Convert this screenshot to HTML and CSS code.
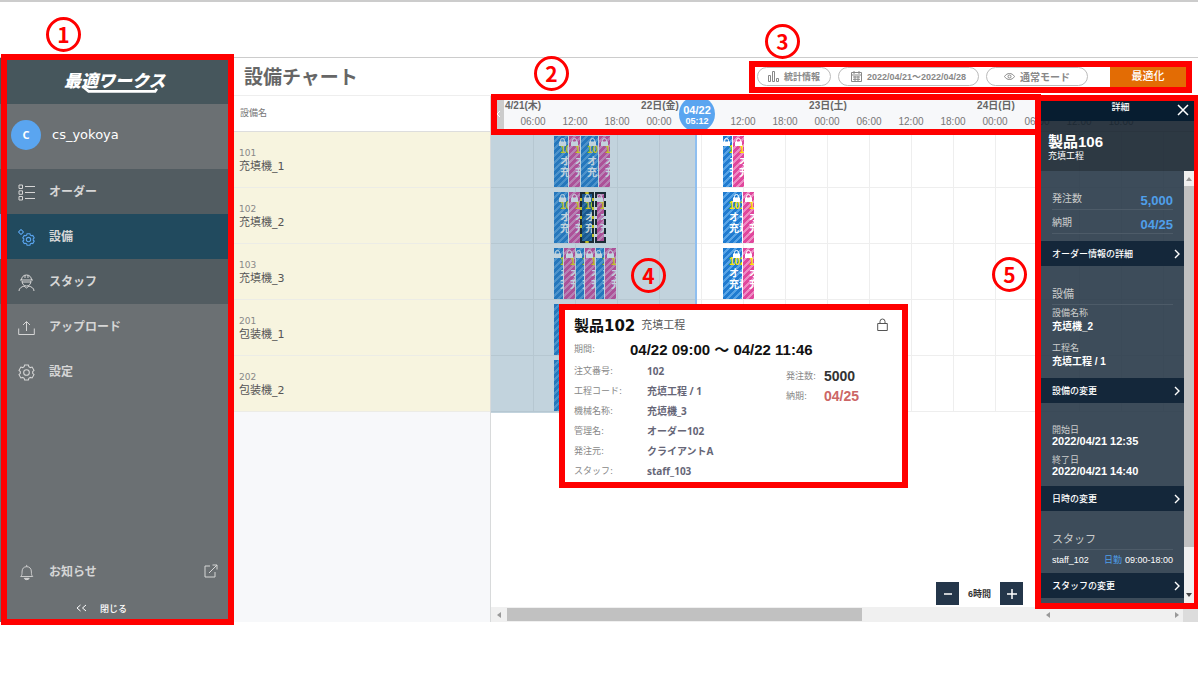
FILE: index.html
```html
<!DOCTYPE html>
<html lang="ja">
<head>
<meta charset="utf-8">
<title>設備チャート</title>
<link rel="stylesheet" href="styles.css">
</head>
<body>
<svg class="defs" aria-hidden="true">
  <symbol id="gear" viewBox="0 0 24 24"><path d="M8.7 3.84 9.34 1.33H14.66L15.3 3.84 17.42 5.07 19.91 4.36 22.57 8.97 20.71 10.78V13.22L22.57 15.03 19.91 19.64 17.42 18.93 15.3 20.16 14.66 22.67H9.34L8.7 20.16 6.58 18.93 4.09 19.64 1.43 15.03 3.29 13.22V10.78L1.43 8.97 4.09 4.36 6.58 5.07Z"/><circle cx="12" cy="12" r="4"/></symbol>
  <symbol id="lock" viewBox="0 0 7 8"><path d="M0 3.5h7V8H0z" fill="#fff"/><path d="M1.5 4V2.5a2 2 0 0 1 4 0V4" fill="none" stroke="#fff"/></symbol>
  <symbol id="chev" viewBox="0 0 6 10"><path d="m1 1 4 4-4 4" fill="none" stroke="#fff" stroke-width="1.4"/></symbol>
</svg>

<div class="app">
  <nav class="side">
    <div class="logo">
      <span class="logo-text">最適ワークス</span>
      <svg class="logo-line" viewBox="0 0 86 8"><path d="M0 0 6 5H82L84 2" fill="none" stroke="#fff" stroke-width="3"/></svg>
    </div>
    <div class="user"><span class="avatar">C</span><span>cs_yokoya</span></div>
    <div class="group">
      <a class="item" href="#"><svg class="ico" viewBox="0 0 17 17"><path d="M1 1h3.500v3.500H1zM1 6.800h3.500v3.500H1zM1 12.500h3.500V16H1zM7 2.500h10M7 8.500h10M7 14.500h10"/></svg>オーダー</a>
      <a class="item current" href="#"><svg class="ico" viewBox="0 0 17 17"><circle cx="3" cy="3" r="2"/><path d="M0 3h1M5 3h1M3 0v1M3 5v1"/><use href="#gear" class="thick" x="4" y="4" width="13" height="13"/></svg>設備</a>
      <a class="item" href="#"><svg class="ico" viewBox="0 0 17 17"><path d="M3.500 6C3.500 3 5.500 1 8.500 1s5 2 5 5M2 6h13M7 1v3M10 1v3M4 7c0 3 2 5 4.500 5S13 10 13 7M4 8h9M1 17c0-3 2.500-4 5-5l2.500 2L11 12c2.500 1 5 2 5 5"/></svg>スタッフ</a>
    </div>
    <a class="item" href="#"><svg class="ico" viewBox="0 0 17 17"><path d="M.7 9.500V15.500H16.300V9.500M8.500 12V3M5 6l3.500-3.500L12 6"/></svg>アップロード</a>
    <a class="item" href="#"><svg class="ico" viewBox="0 0 17 17"><use href="#gear" class="thin" width="17" height="17"/></svg>設定</a>
    <a class="item news" href="#"><svg class="ico" viewBox="0 0 17 19"><path d="M2 14h13.500c-1.500-1.500-1.500-2.500-1.500-5 0-4-2-6-5.300-6S3.500 5 3.500 9c0 2.500 0 3.500-1.500 5zM8.700 3V1"/><path d="M6 16h5.500c0 2-5.500 2-5.500 0z" fill="#ddd"/></svg>お知らせ<svg class="ext" viewBox="0 0 14 14"><path d="M6 2H1v11h10V8M5 9l8-8M8.500 1H13v4.500"/></svg></a>
    <button class="fold" type="button"><svg viewBox="0 0 11 8"><path d="M4.500 1 1 4l3.500 3M10 1 6.500 4 10 7"/></svg>閉じる</button>
    <div class="frame frame-side"></div>
    <span class="num num-1">1</span>
  </nav>

  <main class="main">
    <header class="top">
      <h1>設備チャート</h1>
      <div class="tools">
        <button class="pill stats" type="button"><svg viewBox="0 0 11 11"><path d="M.5 4.500h2v6h-2zM4.500.5h2v10h-2zM8.500 7.500h2v3h-2z"/></svg>統計情報</button>
        <button class="pill dates" type="button"><svg viewBox="0 0 11 11"><path d="M.5 1.500h10v9H.5zM.5 4h10M3 0v3M8 0v3M2 6h7M2 8.300h7M4 5v5M7 5v5"/></svg>2022/04/21～2022/04/28</button>
        <button class="pill mode" type="button"><svg viewBox="0 0 11 11"><path d="M.5 5.500c2.500-4 7.500-4 10 0-2.500 4-7.500 4-10 0z"/><circle cx="5.500" cy="5.500" r="1.500"/></svg>通常モード</button>
        <button class="run" type="button">最適化</button>
        <div class="frame frame-tools"></div>
        <span class="num num-3">3</span>
      </div>
    </header>

    <div class="chart">
      <section class="machines">
        <h2>設備名</h2>
        <ul>
          <li><small>101</small>充填機_1</li>
          <li><small>102</small>充填機_2</li>
          <li><small>103</small>充填機_3</li>
          <li><small>201</small>包装機_1</li>
          <li><small>202</small>包装機_2</li>
        </ul>
      </section>

      <section class="timeline">
        <div class="scale">
          <div class="days"><b>4/21(木)</b><b>22日(金)</b><b>23日(土)</b><b>24日(日)</b></div>
          <div class="hours"><span>06:00</span><span>12:00</span><span>18:00</span><span>00:00</span><span></span><span>12:00</span><span>18:00</span><span>00:00</span><span>06:00</span><span>12:00</span><span>18:00</span><span>00:00</span><span>06:00</span><span>12:00</span><span>18:00</span></div>
          <button class="back" type="button" aria-label="前へ"><svg viewBox="0 0 5 8"><path d="M4 1 1 4l3 3"/></svg></button>
          <div class="now"><b>04/22</b><b>05:12</b></div>
          <div class="frame frame-scale"></div>
          <span class="num num-2">2</span>
        </div>
        <div class="canvas">
          <div class="row">
            <div class="bar blue" style="left:63px;width:14px"><svg><use href="#lock"/></svg><b>10</b><span>オ</span><span>充</span></div>
            <div class="bar pink" style="left:78px;width:11px"><svg><use href="#lock"/></svg><b>1</b><span>オ</span><span>充</span></div>
            <div class="bar blue" style="left:90px;width:17px"><svg><use href="#lock"/></svg><b>103</b><span>オ</span><span>充填</span></div>
            <div class="bar pink" style="left:108px;width:11px"><svg><use href="#lock"/></svg><b>1</b><span>オ</span><span>充</span></div>
            <div class="bar blue" style="left:232px;width:9px"><svg><use href="#lock"/></svg><b>1</b><span>オ</span><span>充</span></div>
            <div class="bar pink" style="left:242px;width:11px"><svg><use href="#lock"/></svg><b>1</b><span>オ</span><span>充</span></div>
          </div>
          <div class="row">
            <div class="bar blue" style="left:63px;width:14px"><svg><use href="#lock"/></svg><b>10</b><span>オ</span><span>充</span></div>
            <div class="bar pink" style="left:78px;width:11px"><svg><use href="#lock"/></svg><b>1</b><span>オ</span><span>充</span></div>
            <div class="bar blue picked" style="left:89px;width:14px"><svg><use href="#lock"/></svg><b>10</b><span>オ</span><span>充</span></div>
            <div class="bar pink linked" style="left:104px;width:11px"><svg><use href="#lock"/></svg><b>1</b><span>オ</span><span>充</span></div>
            <div class="bar blue" style="left:232px;width:19px"><svg><use href="#lock"/></svg><b>101</b><span>オー</span><span>充填</span></div>
            <div class="bar pink" style="left:252px;width:11px"><svg><use href="#lock"/></svg><b>1</b><span>オ</span><span>充</span></div>
          </div>
          <div class="row">
            <div class="bar blue" style="left:63px;width:9px"><svg><use href="#lock"/></svg><b>1</b><span>オ</span><span>充</span></div>
            <div class="bar pink" style="left:73px;width:11px"><svg><use href="#lock"/></svg><b>1</b><span>オ</span><span>充</span></div>
            <div class="bar blue" style="left:85px;width:8px"><svg><use href="#lock"/></svg><b>1</b><span>オ</span><span>充</span></div>
            <div class="bar pink" style="left:94px;width:10px"><svg><use href="#lock"/></svg><b>1</b><span>オ</span><span>充</span></div>
            <div class="bar blue" style="left:105px;width:8px"><svg><use href="#lock"/></svg><b>1</b><span>オ</span><span>充</span></div>
            <div class="bar pink" style="left:114px;width:11px"><svg><use href="#lock"/></svg><b>1</b><span>オ</span><span>充</span></div>
            <div class="bar blue" style="left:232px;width:19px"><svg><use href="#lock"/></svg><b>102</b><span>オー</span><span>充填</span></div>
            <div class="bar pink" style="left:252px;width:11px"><svg><use href="#lock"/></svg><b>1</b><span>オ</span><span>充</span></div>
          </div>
          <div class="row"><div class="bar blue" style="left:63px;width:14px"></div></div>
          <div class="row"><div class="bar blue" style="left:63px;width:14px"></div></div>
          <div class="past"></div>

          <article class="tip">
            <header><h3>製品102</h3><span>充填工程</span><svg viewBox="0 0 11 13"><path d="M.7 5.500h9.600v7H.7zM3 5.500V3.500a2.500 2.500 0 0 1 5 0v2"/></svg></header>
            <div class="term"><span>期間:</span><b>04/22 09:00 ～ 04/22 11:46</b></div>
            <div class="facts">
              <dl class="info">
                <dt>注文番号:</dt><dd>102</dd>
                <dt>工程コード:</dt><dd>充填工程 / 1</dd>
                <dt>機械名称:</dt><dd>充填機_3</dd>
                <dt>管理名:</dt><dd>オーダー102</dd>
                <dt>発注元:</dt><dd>クライアントA</dd>
                <dt>スタッフ:</dt><dd>staff_103</dd>
              </dl>
              <dl class="due"><dt>発注数:</dt><dd>5000</dd><dt>納期:</dt><dd class="late">04/25</dd></dl>
            </div>
            <span class="num num-4">4</span>
          </article>

          <div class="zoom"><button type="button" aria-label="縮小"><svg viewBox="0 0 10 10"><path d="M1 5h8"/></svg></button><b>6時間</b><button type="button" aria-label="拡大"><svg viewBox="0 0 10 10"><path d="M0 5h10M5 0v10"/></svg></button></div>
        </div>
        <div class="hscroll">
          <svg viewBox="0 0 4 6"><path d="M4 0v6L0 3z"/></svg><i></i>
          <span><svg viewBox="0 0 4 6"><path d="M4 0v6L0 3z"/></svg><svg viewBox="0 0 4 6"><path d="M0 0v6l4-3z"/></svg></span><em></em>
        </div>
      </section>
    </div>

    <aside class="detail">
      <header class="detail-head">詳細<button type="button" aria-label="閉じる"><svg viewBox="0 0 12 12"><path d="m1 1 10 10M11 1 1 11"/></svg></button></header>
      <div class="product"><h2>製品106</h2>充填工程</div>
      <div class="detail-body">
        <div class="detail-list">
          <dl class="pairs"><div><dt>発注数</dt><dd>5,000</dd></div><div><dt>納期</dt><dd>04/25</dd></div></dl>
          <button class="link" type="button">オーダー情報の詳細<svg><use href="#chev"/></svg></button>
          <div class="block machine">
            <h3>設備</h3>
            <dl><dt>設備名称</dt><dd>充填機_2</dd><dt>工程名</dt><dd>充填工程 / 1</dd></dl>
          </div>
          <button class="link" type="button">設備の変更<svg><use href="#chev"/></svg></button>
          <div class="block times"><dl><dt>開始日</dt><dd>2022/04/21 12:35</dd><dt>終了日</dt><dd>2022/04/21 14:40</dd></dl></div>
          <button class="link" type="button">日時の変更<svg><use href="#chev"/></svg></button>
          <div class="block staff">
            <h3>スタッフ</h3>
            <p><span>staff_102</span><em>日勤</em><span>09:00-18:00</span></p>
          </div>
          <button class="link" type="button">スタッフの変更<svg><use href="#chev"/></svg></button>
        </div>
        <div class="vscroll"><svg viewBox="0 0 6 4"><path d="M0 4h6L3 0z" fill="#999"/></svg><i></i><svg viewBox="0 0 6 4"><path d="M0 0h6L3 4z" fill="#444"/></svg></div>
      </div>
      <span class="num num-5">5</span>
    </aside>
  </main>
</div>
</body>
</html>
```
FILE: styles.css
```css
* { box-sizing: border-box; }
body {
  margin: 0; min-height: 100vh; padding: 55px 0 53px; display: flex; flex-direction: column;
  border-top: 2px solid #ccc; background: #fff; overflow-x: hidden;
  font-family: "DejaVu Sans", "Noto Sans CJK JP", sans-serif; color: #555;
}
h1, h2, h3, ul, dl, dd, p { margin: 0; padding: 0; }
ul { list-style: none; }
button { border: 0; margin: 0; padding: 0; background: none; font: inherit; color: inherit; cursor: pointer; }
svg { fill: none; stroke: currentColor; flex: none; }
.defs { position: absolute; width: 0; height: 0; }

.app { flex: 1; display: flex; border-top: 1px solid #ccc; position: relative; }

/* annotation marks */
.frame { position: absolute; border: 6px solid #f00; pointer-events: none; z-index: 5; }
.num {
  position: absolute; z-index: 6; width: 35px; height: 35px; border: 3px solid #f00; border-radius: 50%;
  color: #f00; font: bold 21px/28px "Noto Sans CJK JP", sans-serif; text-align: center;
}
.frame-side { inset: -4px -4px -3px 1px; }
.frame-tools { inset: -6px -6px -6px -8px; }
.frame-scale { inset: -2px 157px -4px 0; }
.num-1 { left: 46px; top: -41px; }
.num-2 { left: 43px; top: -40px; }
.num-3 { left: 8px; top: -43px; }
.num-4 { left: 66px; top: -52px; }
.num-5 { left: -49px; top: 156px; }

/* sidebar */
.side { position: relative; z-index: 3; width: 230px; flex: none; display: flex; flex-direction: column; background: #6b7073; color: #ddd; }
.logo { height: 46px; padding: 12px 0 0 64px; background: #46565c; }
.logo-text { display: block; font: italic 900 17px/20px "Noto Sans CJK JP", sans-serif; color: #fff; white-space: nowrap; }
.logo-line { display: block; width: 82px; height: 7px; margin: -3px 0 0 16px; }
.user { height: 65px; display: flex; align-items: center; gap: 11px; padding: 0 0 4px 11px; font-size: 13px; color: #fff; }
.avatar { width: 30px; height: 30px; border-radius: 50%; background: #5aa5f0; font: bold 11px/30px "Noto Sans", sans-serif; text-align: center; }
.group { background: #525c61; }
.item { height: 45px; padding-left: 18px; display: flex; align-items: center; gap: 14px; font-size: 12px; font-weight: 700; color: #d6d6d6; text-decoration: none; padding-bottom: 3px; }
.ico { width: 17px; height: 17px; margin-top: 4px; }
.thin { stroke-width: 1.5; }
.thick { stroke-width: 2; }
.current { background: #214a5e; box-shadow: inset 1px 0 #5aa5f0; }
.current .ico { color: #5aa5f0; }
.news { margin-top: auto; }
.ext { width: 14px; height: 14px; margin: 2px 12px 0 auto; }
.fold { display: flex; align-items: center; gap: 13px; height: 28px; padding-left: 76px; font-size: 9px; font-weight: 500; color: #fff; }
.fold svg { width: 11px; height: 8px; }

/* header */
.main { flex: 1; min-width: 0; position: relative; display: flex; flex-direction: column; }
.top { height: 38px; display: flex; justify-content: space-between; align-items: center; padding: 0 12px 0 14px; border-bottom: 1px solid #eee; }
h1 { font-size: 19px; line-height: 28px; font-weight: 700; color: #666; }
.tools { position: relative; display: flex; align-items: center; gap: 7px; }
.pill { height: 19px; display: flex; align-items: center; justify-content: center; gap: 5px; border: 1px solid #bbb; border-radius: 10px; font: bold 9px "Liberation Sans", "Noto Sans CJK JP", sans-serif; color: #888; white-space: nowrap; }
.pill svg { width: 11px; height: 11px; }
.stats { width: 74px; }
.dates { width: 141px; }
.mode { width: 102px; font-size: 10px; }
.run { width: 76px; height: 20px; margin-left: 15px; background: #e36c04; color: #fff; font-size: 11px; line-height: 20px; font-weight: 500; }

/* chart */
.chart { flex: 1; display: grid; grid-template-columns: 261px minmax(0, 1fr); }
.machines { background: #f7f8fa; border-right: 1px solid #d8dadb; }
.machines h2 { height: 36px; padding-left: 10px; background: #fff; border-bottom: 1px solid #ddd; font-size: 9px; line-height: 34px; font-weight: 400; color: #777; }
.machines li { height: 56px; padding: 14px 0 0 9px; background: #f7f4df; border-bottom: 1px solid #ecece6; font-size: 11px; line-height: 14px; }
.machines small { display: block; font-size: 9px; color: #888; }
.timeline { position: relative; display: flex; flex-direction: column; }
.scale { position: relative; height: 36px; z-index: 1; background: #f7f8fa; border-bottom: 1px solid #ddd; font: 10px/16px "Liberation Sans", "Noto Sans CJK JP", sans-serif; color: #777; white-space: nowrap; }
.days, .hours { display: flex; overflow: hidden; }
.days { padding-top: 2px; color: #666; }
.days b { flex: none; width: 168px; text-align: center; }
.days b:first-child { width: 85px; padding-left: 14px; text-align: left; }
.hours { padding-left: 21px; }
.hours span { flex: none; width: 42px; text-align: center; }
.back { position: absolute; left: 0; top: 0; width: 13px; height: 36px; padding-left: 5px; background: #ccc; color: #fff; }
.back svg { display: block; width: 5px; height: 8px; }
.now { position: absolute; left: 188px; top: 0; width: 36px; height: 36px; padding-top: 8px; border-radius: 50%; background: #5aa5f0; color: #fff; text-align: center; font-size: 11px; line-height: 12px; }
.now b { display: block; }
.now b + b { font-size: 9px; line-height: 11px; }
.canvas { position: relative; flex: 1; }
.row { position: relative; height: 56px; border-bottom: 1px solid #eee; background: repeating-linear-gradient(90deg, #eee 0 1px, transparent 1px 42px) 42px 0 no-repeat; }
.bar { position: absolute; top: 4px; height: 51px; overflow: hidden; color: #fff; font: 700 10px/13px "Liberation Sans", "Noto Sans CJK JP", sans-serif; white-space: nowrap; }
.bar svg { position: absolute; right: 2px; top: 2px; width: 7px; height: 8px; stroke: none; }
.bar b, .bar span { display: block; margin-left: 6px; overflow: hidden; }
.bar b { margin-top: 8px; line-height: 12px; color: #ffe500; }
.bar span { line-height: 11px; }
.blue { background: repeating-linear-gradient(135deg, #1f7bd0 0 3px, #58a4e6 3px 5px); }
.pink { background: repeating-linear-gradient(135deg, #e0469c 0 3px, #ee8cc4 3px 5px); }
.picked, .linked { border: 2px dashed #111; }
.picked { background: repeating-linear-gradient(135deg, #0d4f90 0 3px, #2b70ac 3px 5px) padding-box, #ffe500 border-box; }
.linked { background: repeating-linear-gradient(135deg, #e0469c 0 3px, #ee8cc4 3px 5px) padding-box, #fff border-box; }
.picked svg, .linked svg { top: 0; right: 1px; }
.picked b, .linked b { margin-top: 6px; }
.picked b, .picked span, .linked b, .linked span { margin-left: 3px; }
.past { position: absolute; left: 0; top: 0; width: 206px; height: 281px; background: rgba(52, 108, 142, .3); border-right: 2px solid #8fbff0; }

/* tooltip card */
.tip { position: absolute; left: 68px; top: 172px; width: 349px; height: 184px; padding: 4px 14px 0 9px; border: 6px solid #f00; background: #fff; z-index: 2; }
.tip header { display: flex; align-items: center; gap: 6px; height: 20px; font-size: 11px; }
.tip h3 { font-size: 15px; color: #111; }
.tip header svg { width: 11px; height: 13px; margin-left: auto; }
.term { display: flex; align-items: center; height: 28px; }
.term span, .tip dt { font-size: 9px; color: #888; }
.term span { width: 56px; }
.term b { font: bold 15px "Liberation Sans", "Noto Sans CJK JP", sans-serif; color: #111; }
.facts { display: flex; justify-content: space-between; margin-top: -1px; }
.info { display: grid; grid-template-columns: 73px auto; line-height: 20px; }
.info dd { font: bold 10px/20px "Noto Sans", "Noto Sans CJK JP", sans-serif; color: #667; }
.due { display: grid; grid-template-columns: 38px auto; align-content: start; align-items: center; padding: 5px 29px 0 0; line-height: 20px; }
.due dd { font: bold 14px/20px "Liberation Sans", sans-serif; color: #333; }
.due .late { color: #cc6666; }

.zoom { position: absolute; right: 175px; bottom: 2px; display: flex; align-items: center; gap: 8px; font-size: 9px; color: #333; }
.zoom b { font: bold 9px "Liberation Sans", "Noto Sans CJK JP", sans-serif; width: 25px; text-align: center; white-space: nowrap; }
.zoom button { width: 23px; height: 23px; background: #24364a; color: #fff; display: flex; align-items: center; justify-content: center; }
.zoom svg { width: 10px; height: 10px; stroke-width: 1.5; }
.hscroll { height: 15px; display: flex; align-items: center; background: #f0f0f0; padding-left: 6px; }
.hscroll svg { width: 4px; height: 6px; fill: #999; stroke: none; }
.hscroll i { width: 355px; height: 13px; margin-left: 6px; background: #c1c1c1; }
.hscroll span { margin-left: auto; width: 133px; margin-right: 4px; display: flex; justify-content: space-between; }
.hscroll em { width: 15px; height: 15px; background: #dcdcdc; }

/* detail panel */
.detail { position: absolute; right: 0; top: 37px; bottom: 13px; width: 163px; z-index: 4; display: flex; flex-direction: column; border: 6px solid #f00; border-right-width: 4px; background: rgba(27, 45, 61, .85) padding-box; color: #fff; font: 9px/12px "Liberation Sans", "Noto Sans CJK JP", sans-serif; }
.detail-head { position: relative; height: 20px; padding: 0 0 6px 6px; background: #071d30; text-align: center; font-weight: 500; }
.detail-head button { position: absolute; right: 5px; top: 3px; width: 12px; height: 12px; }
.detail-head svg { display: block; width: 12px; height: 12px; stroke-width: 1.5; }
.product { height: 50px; padding: 13px 0 0 7px; background: rgba(0, 0, 0, .25); }
.product h2 { font-size: 15px; line-height: 16px; }
.detail-body { flex: 1; display: flex; min-height: 0; }
.detail-list { flex: 1; }
.pairs { padding: 18px 11px 4px; }
.pairs div { display: flex; justify-content: space-between; align-items: center; height: 21px; margin-bottom: 3px; border-bottom: 1px solid #4d5b68; }
.pairs dt { font-size: 10px; color: #ccc; }
.pairs dd { font-size: 13px; font-weight: bold; color: #4f9fea; padding-top: 3px; }
.link { display: flex; width: 100%; height: 25px; align-items: center; justify-content: space-between; padding: 0 4px 0 11px; background: #14273a; font-weight: 500; }
.link svg { width: 6px; height: 10px; }
.block { padding: 0 11px; color: #ccc; }
.block h3 { font-size: 11px; line-height: 16px; font-weight: 400; padding-bottom: 2px; border-bottom: 1px solid #4d5b68; }
.block dt { line-height: 12px; }
.block dd { color: #fff; font-weight: bold; }
.machine { height: 112px; padding-top: 20px; }
.machine dl { padding-top: 2px; }
.machine dd { font-size: 10px; line-height: 16px; margin-bottom: 7px; }
.times { height: 83px; padding-top: 21px; }
.times dd { font-size: 11px; line-height: 11px; margin-bottom: 7px; }
.staff { height: 62px; padding-top: 20px; }
.staff p { display: flex; gap: 3px; padding-top: 4px; color: #fff; }
.staff p span:first-child { margin-right: auto; }
.staff em { font-style: normal; color: #4f9fea; }
.vscroll { width: 10px; display: flex; flex-direction: column; align-items: center; gap: 5px; padding: 6px 0; background: #f0f0f0; }
.vscroll svg { width: 6px; height: 4px; stroke: none; }
.vscroll i { width: 10px; height: 361px; background: #c1c1c1; margin-bottom: auto; }
```
